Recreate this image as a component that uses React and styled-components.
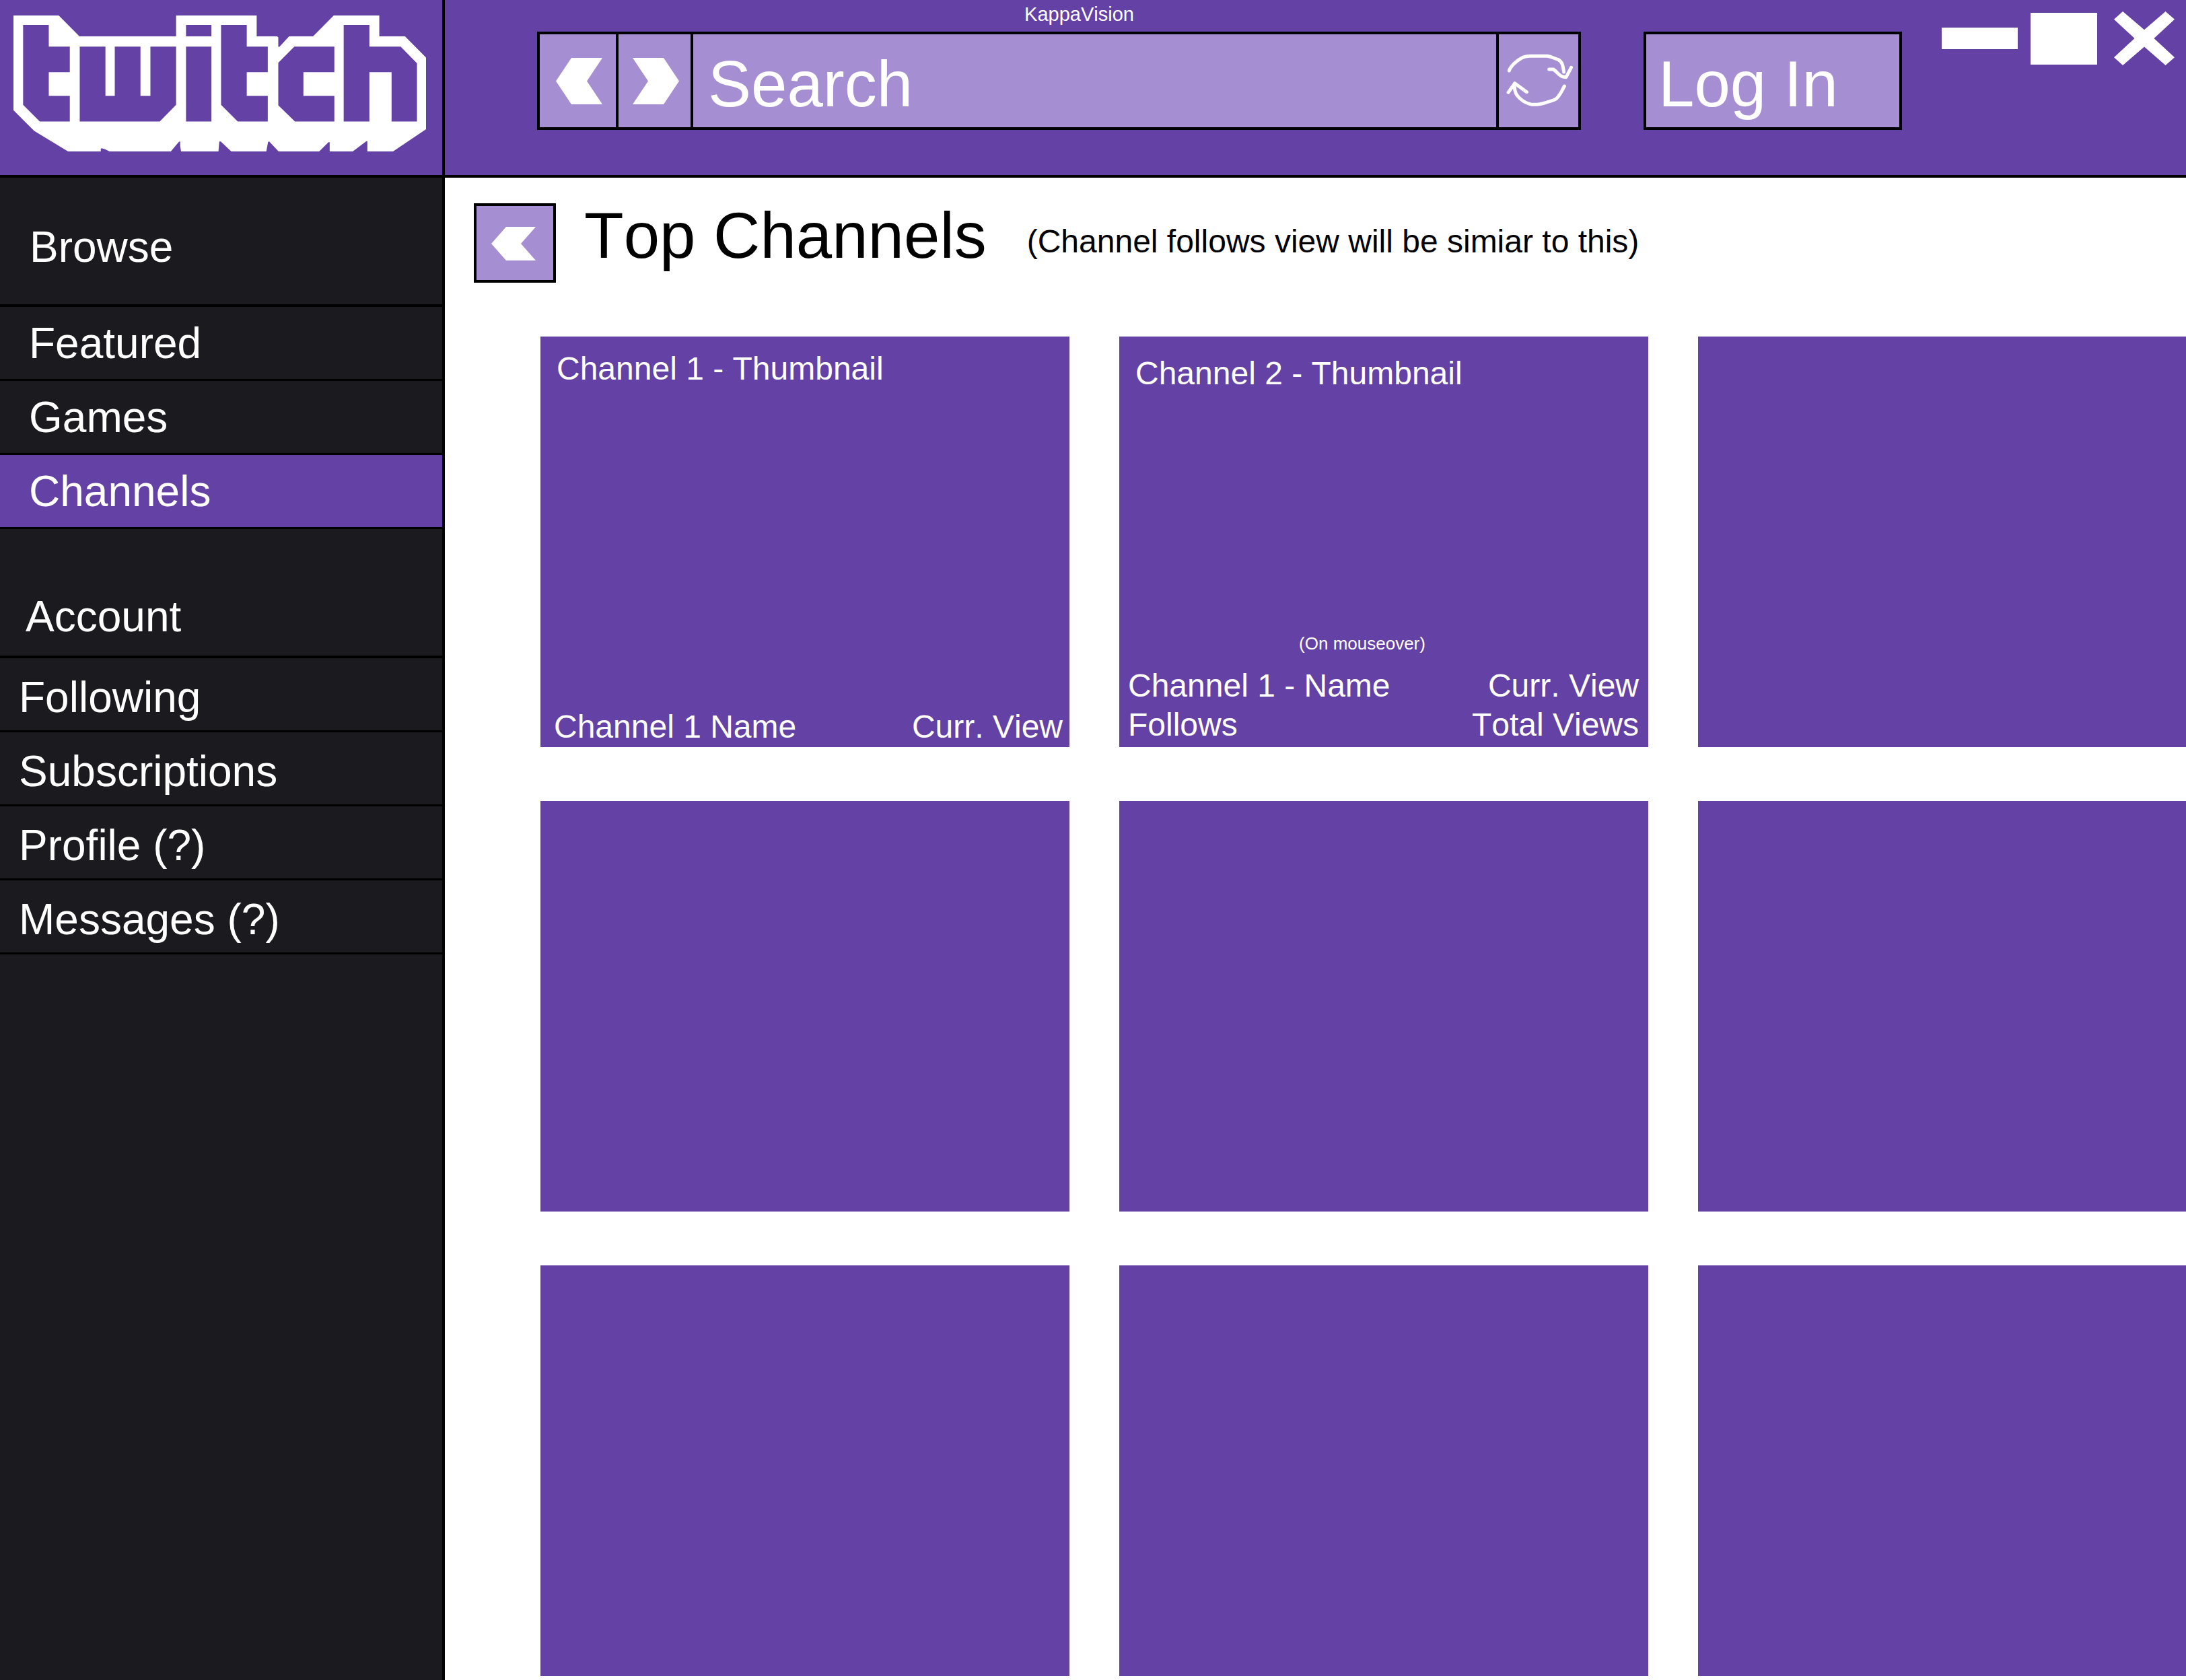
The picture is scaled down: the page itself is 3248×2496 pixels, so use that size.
import React from "react";
import styled, { createGlobalStyle } from "styled-components";

const purple = "#6441a4";
const lilac = "#a68ed2";
const ink = "#1b1a1f";
const line = "#000";

const GlobalStyle = createGlobalStyle`
  *, *::before, *::after { box-sizing: border-box; }
  body {
    margin: 0;
    background: #fff;
    color: #000;
    font-family: "Liberation Sans", Arial, Helvetica, sans-serif;
    font-kerning: none;
  }
  h1, h2, p, ul { margin: 0; padding: 0; font-weight: normal; }
  button, input {
    margin: 0;
    padding: 0;
    border: 0;
    border-radius: 0;
    background: none;
    color: inherit;
    font: inherit;
    font-kerning: none;
  }
  button { cursor: pointer; }
  a { color: inherit; text-decoration: none; }
  svg { display: block; flex: none; }
`;

const Page = styled.div`
  display: grid;
  grid-template-columns: 661px minmax(0, 1fr);
  grid-template-rows: auto 1fr;
  min-height: 100vh;
`;

const LogoCell = styled.div`
  padding: 23px 20px 0;
  background: ${purple};
  border-right: 4px solid ${line};
  border-bottom: 4px solid ${line};
`;

const LogoLink = styled.a`
  display: block;
`;

const TopBar = styled.header`
  display: flex;
  align-items: flex-start;
  height: 264px;
  padding: 0 17px 0 137px;
  background: ${purple};
  border-bottom: 4px solid ${line};
  color: #fff;
`;

const SearchColumn = styled.div`
  flex: 1;
  min-width: 0;
`;

const AppTitle = styled.p`
  height: 47px;
  padding-left: 60px;
  font-size: 29px;
  line-height: 42px;
  text-align: center;
`;

const SearchBar = styled.form`
  display: flex;
  height: 146px;
  background: ${lilac};
  border: 4px solid ${line};
`;

const BarButton = styled.button`
  display: flex;
  align-items: center;
  justify-content: center;
  flex: none;
  width: ${(p) => p.$width}px;
  padding-left: 3px;
  border-right: ${(p) => (p.$last ? 0 : 4)}px solid ${line};
  border-left: ${(p) => (p.$last ? 4 : 0)}px solid ${line};
`;

const SearchInput = styled.input`
  flex: 1;
  min-width: 0;
  padding: 10px 22px 0;
  font-size: 96px;
  outline: none;
  &::placeholder { color: #fff; opacity: 1; }
`;

const LogInButton = styled.button`
  flex: none;
  width: 384px;
  height: 146px;
  margin: 47px 59px 0 93px;
  padding: 10px 16px 0 18px;
  background: ${lilac};
  border: 4px solid ${line};
  font-size: 96px;
  line-height: 128px;
  text-align: left;
`;

const WindowControls = styled.div`
  display: flex;
  align-items: center;
  gap: 19px;
  flex: none;
  height: 80px;
  margin-top: 17px;
`;

const ControlButton = styled.button`
  display: flex;
  justify-content: flex-end;
  min-width: 96px;
`;

const Sidebar = styled.nav`
  background: ${ink};
  border-right: 4px solid ${line};
  color: #fff;
  font-size: 64px;
  line-height: 72px;
`;

const GroupHeading = styled.h2`
  display: flex;
  align-items: flex-end;
  height: 192px;
  padding: 0 0 ${(p) => p.$below}px ${(p) => p.$inset}px;
  border-bottom: 4px solid ${line};
  font-size: inherit;
`;

const NavList = styled.ul`
  list-style: none;
`;

const NavLink = styled.a`
  display: flex;
  align-items: center;
  height: 110px;
  padding: ${(p) => p.$drop}px 0 0 ${(p) => p.$inset}px;
  background: ${(p) => (p.$active ? purple : "transparent")};
  border-bottom: 3px solid ${line};
`;

const Main = styled.main`
  padding-top: 38px;
  overflow: hidden;
`;

const TitleRow = styled.div`
  display: flex;
  align-items: flex-start;
  padding-left: 43px;
`;

const BackButton = styled.button`
  display: flex;
  align-items: center;
  justify-content: center;
  width: 122px;
  height: 118px;
  margin-right: 42px;
  padding: 2px 4px 0 0;
  background: ${lilac};
  border: 4px solid ${line};
  color: #fff;
`;

const PageTitle = styled.h1`
  font-size: 96px;
  line-height: 96px;
`;

const PageNote = styled.p`
  margin-left: 60px;
  font-size: 48px;
  line-height: 114px;
`;

const ChannelGrid = styled.div`
  display: grid;
  grid-template-columns: repeat(3, minmax(786px, 1fr));
  gap: 80px 74px;
  padding: 80px 0 6px 142px;
`;

const Card = styled.article`
  display: flex;
  flex-direction: column;
  justify-content: space-between;
  height: 610px;
  background: ${purple};
  color: #fff;
  font-size: 48px;
  line-height: 58px;
`;

const CardTitle = styled.h2`
  padding: ${(p) => (p.$expanded ? 26 : 19)}px 24px 0;
  font-size: inherit;
`;

const CardHint = styled.p`
  padding: 0 64px 18px 0;
  font-size: 26px;
  line-height: 32px;
  text-align: center;
`;

const CardStats = styled.div`
  display: grid;
  grid-template-columns: 1fr auto;
  padding: ${(p) => (p.$expanded ? "0 14px 4px 13px" : "0 10px 1px 20px")};
`;

const Stat = styled.span`
  text-align: ${(p) => (p.$end ? "right" : "left")};
`;

function Logo() {
  return (
    <svg width="613" height="202" viewBox="46 70 1413 604" preserveAspectRatio="none" aria-hidden="true">
      <path
        fill="#fff"
        fillRule="evenodd"
        d="M46 70H201L272 163H603V70H879V163H949L953 167V209H957L990 163H1072L1143 70H1299V163H1387L1459 257V575L1346 674H1258V628L1254 629L1208 674H1129V633H1125L1093 674H954L922 630L918 632L912 674H792L756 630H751L748 674H620L617 650V630L613 631L585 674H375L360 664L348 660L345 662V674H233L117 583L46 491Z
        M79 112V467L136 541H239V427H167V322H239V208H167V112Z
        M273 208V541H547L603 467V208H515V427H481V208H393V427H361V208Z
        M637 112V163H724V112Z
        M637 208V541H724V208Z
        M757 112V467L814 541H917V427H845V322H917V208H845V112Z
        M1008 208L953 280V469L1010 541H1145V427H1039V322H1145V208Z
        M1177 112V541H1265V322H1341V541H1428V282L1372 208H1265V112Z"
      />
    </svg>
  );
}

function Chevron({ forward, width = 69, height = 69 }) {
  return (
    <svg width={width} height={height} viewBox="0 0 69 69" preserveAspectRatio="none" aria-hidden="true">
      <path fill="#fff" d={forward ? "M0 0H46L69 34.5L46 69H0L23 34.5Z" : "M69 0H23L0 34.5L23 69H69L46 34.5Z"} />
    </svg>
  );
}

function RefreshIcon() {
  return (
    <svg width="104" height="84" viewBox="85 231 247 252" preserveAspectRatio="none" aria-hidden="true">
      <g fill="none" stroke="#fff" strokeWidth="5" strokeLinecap="round" strokeLinejoin="round">
        <path vectorEffect="non-scaling-stroke" d="M100 312C104 295 125 268 142 257C155 248 165 247 175 247H235C250 250 260 258 272 262C288 272 290 290 293 318" />
        <path vectorEffect="non-scaling-stroke" d="M241 306H256C268 315 275 333 289 339L301 341L319 298" />
        <path vectorEffect="non-scaling-stroke" d="M295 381C287 400 280 420 268 435C258 447 240 448 228 455C210 464 200 463 180 463C160 458 148 447 140 438C125 420 120 410 119 385" />
        <path vectorEffect="non-scaling-stroke" d="M97 409L120 368L162 407" />
      </g>
    </svg>
  );
}

const navGroups = [
  {
    title: "Browse",
    headingInset: 44,
    below: 49,
    inset: 43,
    drop: 0,
    items: [{ name: "Featured" }, { name: "Games" }, { name: "Channels", active: true }],
  },
  {
    title: "Account",
    headingInset: 38,
    below: 22,
    inset: 28,
    drop: 9,
    items: [{ name: "Following" }, { name: "Subscriptions" }, { name: "Profile (?)" }, { name: "Messages (?)" }],
  },
];

const channels = [
  { title: "Channel 1 - Thumbnail", stats: ["Channel 1 Name", "Curr. View"] },
  {
    title: "Channel 2 - Thumbnail",
    hint: "(On mouseover)",
    stats: ["Channel 1 - Name", "Curr. View", "Follows", "Total Views"],
  },
  {}, {}, {}, {}, {}, {}, {},
];

function ChannelCard({ title, hint, stats }) {
  const expanded = Boolean(hint);
  return (
    <Card>
      {title && <CardTitle $expanded={expanded}>{title}</CardTitle>}
      {stats && (
        <div>
          {hint && <CardHint>{hint}</CardHint>}
          <CardStats $expanded={expanded}>
            {stats.map((text, i) => (
              <Stat key={text} $end={i % 2 === 1}>{text}</Stat>
            ))}
          </CardStats>
        </div>
      )}
    </Card>
  );
}

export default function App() {
  return (
    <>
      <GlobalStyle />
      <Page>
        <LogoCell>
          <LogoLink href="#home" aria-label="Twitch">
            <Logo />
          </LogoLink>
        </LogoCell>
        <TopBar>
          <SearchColumn>
            <AppTitle>KappaVision</AppTitle>
            <SearchBar role="search" onSubmit={(e) => e.preventDefault()}>
              <BarButton type="button" $width={117} aria-label="Back">
                <Chevron />
              </BarButton>
              <BarButton type="button" $width={111} aria-label="Forward">
                <Chevron forward />
              </BarButton>
              <SearchInput type="text" placeholder="Search" aria-label="Search" />
              <BarButton type="button" $width={122} $last aria-label="Refresh">
                <RefreshIcon />
              </BarButton>
            </SearchBar>
          </SearchColumn>
          <LogInButton type="button">Log In</LogInButton>
          <WindowControls>
            <ControlButton type="button" aria-label="Minimize">
              <svg width="113" height="32" viewBox="0 0 113 32" aria-hidden="true">
                <rect width="113" height="32" fill="#fff" />
              </svg>
            </ControlButton>
            <ControlButton type="button" aria-label="Maximize">
              <svg width="99" height="77" viewBox="0 0 99 77" aria-hidden="true">
                <rect width="99" height="77" fill="#fff" />
              </svg>
            </ControlButton>
            <ControlButton type="button" aria-label="Close">
              <svg width="90" height="80" viewBox="844 55 268 238" preserveAspectRatio="none" aria-hidden="true">
                <path fill="#fff" d="M844 90L883 55L978 136L1072 55L1112 90L1021 174L1112 258L1072 293L978 211L883 293L844 258L935 174Z" />
              </svg>
            </ControlButton>
          </WindowControls>
        </TopBar>
        <Sidebar aria-label="Main">
          {navGroups.map((group) => (
            <section key={group.title}>
              <GroupHeading $below={group.below} $inset={group.headingInset}>
                {group.title}
              </GroupHeading>
              <NavList>
                {group.items.map((item) => (
                  <li key={item.name}>
                    <NavLink
                      href={"#" + item.name.split(" ")[0].toLowerCase()}
                      $active={item.active}
                      $inset={group.inset}
                      $drop={group.drop}
                      aria-current={item.active ? "page" : undefined}
                    >
                      {item.name}
                    </NavLink>
                  </li>
                ))}
              </NavList>
            </section>
          ))}
        </Sidebar>
        <Main>
          <TitleRow>
            <BackButton type="button" aria-label="Go back">
              <Chevron width={66} height={50} />
            </BackButton>
            <PageTitle>Top Channels</PageTitle>
            <PageNote>(Channel follows view will be simiar to this)</PageNote>
          </TitleRow>
          <ChannelGrid>
            {channels.map((channel, i) => (
              <ChannelCard key={i} {...channel} />
            ))}
          </ChannelGrid>
        </Main>
      </Page>
    </>
  );
}
